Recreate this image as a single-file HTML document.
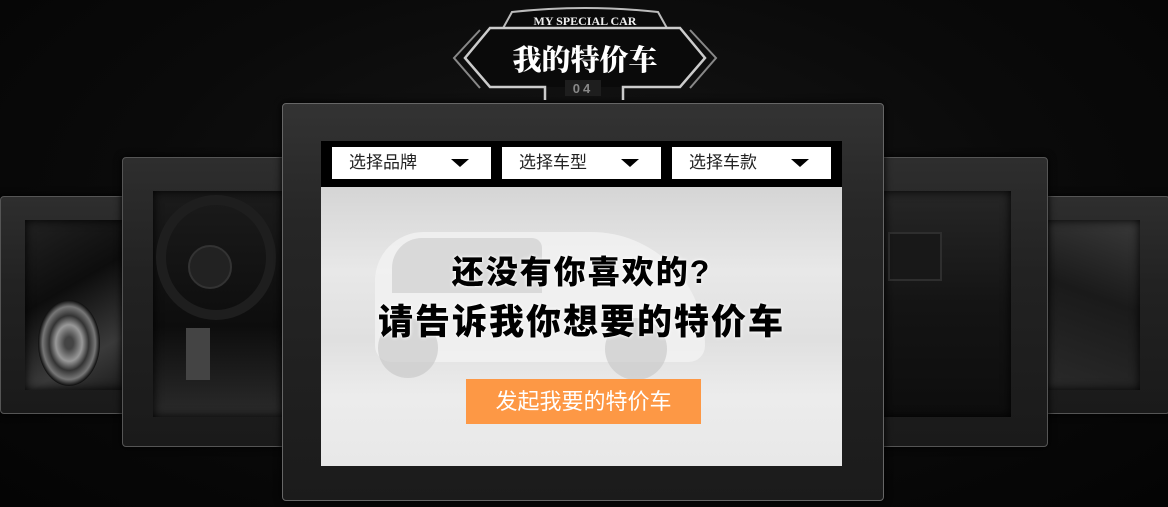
<!DOCTYPE html>
<html><head><meta charset="utf-8"><style>
body{margin:0;width:1168px;height:507px;overflow:hidden;background:#070707;position:relative;font-family:"Liberation Sans","Noto Sans CJK SC",sans-serif}
.bg{position:absolute;inset:0;background:radial-gradient(ellipse at 50% 40%,#161616 0%,#0a0a0a 55%,#040404 100%)}
.fr{position:absolute;background:linear-gradient(180deg,#2e2e2e,#222 40%,#1a1a1a);border:1px solid #555;border-radius:4px;box-shadow:0 0 8px #000}
.in{position:absolute;background:linear-gradient(160deg,#2a2a2a,#111 50%,#1c1c1c);box-shadow:inset 0 0 10px #000}
.dd{position:absolute;top:147px;width:159px;height:32px;background:#fff;font-size:17px;color:#222;line-height:32px}
.dd span{position:absolute;left:17px}
.dd i{position:absolute;right:22px;top:12px;width:0;height:0;border-left:9px solid transparent;border-right:9px solid transparent;border-top:8px solid #000}
.t{position:absolute;left:321px;width:521px;text-align:center;font-weight:900;color:#000;letter-spacing:2px;text-shadow:0 0 2px #fff,0 0 4px #fff}
</style></head><body>
<div class="bg"></div>
<div class="fr" style="left:0;top:196px;width:130px;height:216px"></div>
<div class="in" style="left:25px;top:220px;width:105px;height:170px;background:linear-gradient(150deg,#222,#0d0d0d 40%,#3a3a3a 75%,#1a1a1a)"></div>
<div style="position:absolute;left:38px;top:300px;width:62px;height:86px;border-radius:50%;background:radial-gradient(#444 10%,#999 30%,#333 45%,#777 60%,#111 70%)"></div>
<div class="fr" style="left:122px;top:157px;width:170px;height:288px"></div>
<div class="in" style="left:153px;top:191px;width:135px;height:226px;background:linear-gradient(180deg,#1b1b1b,#0d0d0d 60%,#2b2b2b)"></div>
<div style="position:absolute;left:156px;top:195px;width:120px;height:125px;border-radius:50%;border:10px solid #1e1e1e;box-sizing:border-box"></div>
<div style="position:absolute;left:188px;top:245px;width:40px;height:40px;border-radius:50%;background:#222;border:2px solid #333"></div>
<div style="position:absolute;left:186px;top:328px;width:24px;height:52px;background:#444"></div>
<div class="fr" style="left:1038px;top:196px;width:130px;height:216px"></div>
<div class="in" style="left:1043px;top:220px;width:97px;height:170px;background:linear-gradient(200deg,#3a3a3a,#1a1a1a 45%,#2a2a2a)"></div>
<div class="fr" style="left:876px;top:157px;width:170px;height:288px"></div>
<div class="in" style="left:880px;top:191px;width:131px;height:226px;background:linear-gradient(180deg,#262626,#141414 50%,#0d0d0d)"></div>
<div style="position:absolute;left:888px;top:232px;width:50px;height:45px;background:#181818;border:2px solid #2e2e2e"></div>
<div class="fr" style="left:282px;top:103px;width:600px;height:396px;background:linear-gradient(180deg,#333,#262626 30%,#1b1b1b);border-color:#666"></div>
<div style="position:absolute;left:321px;top:141px;width:521px;height:46px;background:#000"></div>
<div style="position:absolute;left:321px;top:187px;width:521px;height:279px;background:linear-gradient(180deg,#d5d5d5 0%,#e8e8e8 30%,#e0e0e0 55%,#ececec 75%,#e8e8e8 100%)"></div>
<div style="position:absolute;left:375px;top:232px;width:330px;height:130px;border-radius:60px 140px 20px 20px;background:#f3f3f3;opacity:.8"></div>
<div style="position:absolute;left:392px;top:238px;width:150px;height:55px;background:#c9c9c9;border-radius:30px 10px 0 0;opacity:.6"></div>
<div style="position:absolute;left:378px;top:318px;width:60px;height:60px;border-radius:50%;background:#c4c4c4;opacity:.6"></div>
<div style="position:absolute;left:605px;top:318px;width:62px;height:62px;border-radius:50%;background:#c4c4c4;opacity:.6"></div>
<div class="dd" style="left:332px"><span>选择品牌</span><i></i></div>
<div class="dd" style="left:502px"><span>选择车型</span><i></i></div>
<div class="dd" style="left:672px"><span>选择车款</span><i></i></div>
<div class="t" style="top:252px;font-size:32px;line-height:40px">还没有你喜欢的?</div>
<div class="t" style="top:302px;font-size:35px;line-height:42px">请告诉我你想要的特价车</div>
<div style="position:absolute;left:466px;top:379px;width:235px;height:45px;background:#fd9845;color:#fff;font-size:22px;line-height:45px;text-align:center">发起我要的特价车</div>
<svg style="position:absolute;left:440px;top:0" width="290" height="104">
<path d="M62 30 L72 12 Q145 4 218 12 L228 30" fill="#0a0a0a" stroke="#bbb" stroke-width="2"/>
<polygon points="50,28 240,28 265,58 240,87 50,87 25,58" fill="#0a0a0a"/>
<path d="M105 100 L105 87 L50 87 L25 58 L50 28 L240 28 L265 58 L240 87 L183 87 L183 100" fill="none" stroke="#ccc" stroke-width="2.5"/>
<path d="M40 30 L14 58 L40 88" fill="none" stroke="#888" stroke-width="2"/>
<path d="M250 30 L276 58 L250 88" fill="none" stroke="#888" stroke-width="2"/>
<rect x="125" y="80" width="36" height="16" fill="#1e1e1e"/>
<text x="145" y="25" fill="#eee" font-size="12" font-weight="bold" text-anchor="middle" font-family="Liberation Serif,serif">MY SPECIAL CAR</text>
<text x="145" y="70" fill="#fff" font-size="29" font-weight="900" text-anchor="middle" font-family="Noto Serif CJK SC,serif">我的特价车</text>
<text x="143" y="93" fill="#888" font-size="13" font-weight="bold" text-anchor="middle" letter-spacing="3">04</text>
</svg>
</body></html>
